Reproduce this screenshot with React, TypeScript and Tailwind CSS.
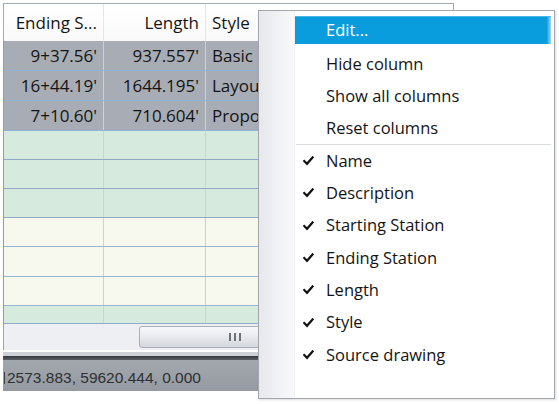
import React from "react";

const font = { fontFamily: '"Open Sans", "Noto Sans", sans-serif' };

type Row = { a: string; b: string; c: string; kind: "sel" | "green" | "yellow"; h: string };

const rows: Row[] = [
  { a: "9+37.56'", b: "937.557'", c: "Basic", kind: "sel", h: "h-[30px]" },
  { a: "16+44.19'", b: "1644.195'", c: "Layout", kind: "sel", h: "h-[30px]" },
  { a: "7+10.60'", b: "710.604'", c: "Proposed", kind: "sel", h: "h-[30px]" },
  { a: "", b: "", c: "", kind: "green", h: "h-[29px]" },
  { a: "", b: "", c: "", kind: "green", h: "h-[29px]" },
  { a: "", b: "", c: "", kind: "green", h: "h-[29px]" },
  { a: "", b: "", c: "", kind: "yellow", h: "h-[29px]" },
  { a: "", b: "", c: "", kind: "yellow", h: "h-[30px]" },
  { a: "", b: "", c: "", kind: "yellow", h: "h-[29px]" },
  { a: "", b: "", c: "", kind: "green", h: "h-[18px]" },
];

function rowClass(k: Row["kind"]) {
  if (k === "sel") return "bg-[#a8acb4] border-b border-[#8db3d8]";
  if (k === "green") return "bg-[#d6ebdd] border-b-[1.5px] border-[#8eaac8]";
  return "bg-[#f8f9ee] border-b-[1.5px] border-[#98b5d3]";
}

function Check() {
  return (
    <svg width="11" height="10" viewBox="0 0 11 10" className="shrink-0">
      <path d="M1.2 5 L4 7.8 L9.6 1.4" fill="none" stroke="#111" strokeWidth="2.2" strokeLinecap="square" />
    </svg>
  );
}

const items1 = ["Hide column", "Show all columns", "Reset columns"];
const items2 = ["Name", "Description", "Starting Station", "Ending Station", "Length", "Style", "Source drawing"];

export default function App() {
  return (
    <div className="relative w-[559px] h-[404px] bg-white overflow-hidden text-[#141414]" style={font}>
      {/* Table window */}
      <div className="ml-[3px] mt-[3px] w-[451px] border-l border-t border-r border-[#a3aab5] flex flex-col">
        {/* header */}
        <div className="flex h-[37px] bg-gradient-to-b from-white to-[#f9f9fa] text-[17px]">
          <div className="w-[100px] border-r border-[#e3e6ea] flex items-center justify-end pr-[6px] whitespace-nowrap">Ending S...</div>
          <div className="w-[102px] border-r border-[#e3e6ea] flex items-center justify-end pr-[6px]">Length</div>
          <div className="flex-1 flex items-center pl-[6px]">Style</div>
        </div>
        {/* rows */}
        <div className="border-l border-[#8c9db2] -ml-px">
          {rows.map((r, i) => (
            <div key={i} className={`flex ${r.h} ${rowClass(r.kind)} text-[17px]`}>
              <div className="w-[100px] border-r border-[#f2c3c3] flex items-center justify-end pr-[6px] whitespace-nowrap">{r.a}</div>
              <div className="w-[102px] border-r border-[#f2c3c3] flex items-center justify-end pr-[6px] whitespace-nowrap">{r.b}</div>
              <div className="flex-1 flex items-center pl-[6px] whitespace-nowrap overflow-hidden">{r.c}</div>
            </div>
          ))}
        </div>
        {/* horizontal scrollbar */}
        <div className="h-[26px] bg-[#eeeff3] flex items-center pl-[135px] -ml-px border-l border-[#9aa3ae]">
          <div className="h-[22px] flex-1 rounded-l-[3px] border border-[#a9aeb6] bg-gradient-to-b from-[#f7f8fa] via-[#e8eaee] to-[#d3d6dc] flex items-center pl-[89px]">
            <div className="flex gap-[3px]">
              <div className="w-[2px] h-[8px] bg-[#6d7178]" />
              <div className="w-[2px] h-[8px] bg-[#6d7178]" />
              <div className="w-[2px] h-[8px] bg-[#6d7178]" />
            </div>
          </div>
        </div>
        <div className="h-[2px] bg-white -ml-px" />
        <div className="h-[4px] bg-[#cdd0d5] -ml-px" />
        <div className="h-[4px] bg-gradient-to-b from-[#34373c] to-[#5d6167] -ml-px" />
        {/* status bar */}
        <div className="h-[31px] -ml-px overflow-hidden bg-gradient-to-b from-[#a3a8ae] to-[#959aa1] flex items-center pt-[5px]">
          <div className="w-[1px] h-[12px] bg-[#3a3c40] ml-[1px] mr-[2px]" />
          <span className="text-[15.5px] text-[#2e3033] whitespace-nowrap" style={{ fontFamily: '"Liberation Sans", Arial, sans-serif' }}>
            2573.883, 59620.444, 0.000
          </span>
        </div>
      </div>

      {/* context menu */}
      <div className="absolute left-[258px] top-[10px] w-[297px] h-[389px] border border-[#a4a8ae] bg-white flex shadow-[1px_1px_2px_rgba(0,0,0,0.15)]">
        <div className="w-[36px] bg-gradient-to-r from-[#e6e8ec] to-[#f9f9fb] border-r border-[#eef0f3]" />
        <div className="flex-1 pt-[5px] pr-[3px] text-[16.5px]">
          <div className="h-[32px]">
            <div className="h-[28px] bg-[#0a9ddd] border-t border-[#4bb6e8] flex items-center pl-[31px] text-white relative">
              Edit...
              <div className="absolute right-0 top-0 bottom-0 w-[4px] bg-gradient-to-r from-[#0a9ddd] to-[#9fd6f0]" />
            </div>
          </div>
          {items1.map((t) => (
            <div key={t} className="h-[32px] flex items-center pl-[31px]">{t}</div>
          ))}
          <div className="h-[1px] bg-[#dadbdd] ml-[1px]" />
          {items2.map((t) => (
            <div key={t} className="h-[32.3px] flex items-center pl-[8px]">
              <Check />
              <span className="ml-[12px]">{t}</span>
            </div>
          ))}
        </div>
      </div>
    </div>
  );
}
